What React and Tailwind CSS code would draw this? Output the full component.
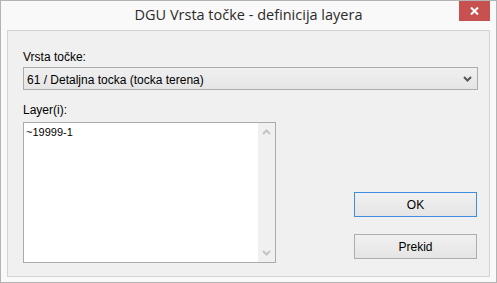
import React from "react";

const Chevron = ({ up, color }) => (
  <svg width="9" height="6" viewBox="0 0 9 6">
    <polyline
      points={up ? "1,5 4.5,1.5 8,5" : "1,1 4.5,4.5 8,1"}
      fill="none"
      stroke={color}
      strokeWidth="2"
    />
  </svg>
);

export default function App() {
  return (
    <div className="w-[497px] h-[283px] border border-[#b4b4b4] bg-[#f9f9f9] flex flex-col font-['Liberation_Sans',Arial,sans-serif] text-black">
      {/* title bar */}
      <div className="relative h-[29px] flex items-center justify-center">
        <span className="font-['Open_Sans',sans-serif] text-[14.5px] text-[#2b2b2b] leading-none pb-[1px]">
          DGU Vrsta točke - definicija layera
        </span>
        <button className="absolute right-[6px] top-0 w-[31px] h-[20px] bg-[#c75050] flex items-center justify-center">
          <svg width="9" height="8" viewBox="0 0 9 8">
            <path d="M1 0.5 L8 7.5 M8 0.5 L1 7.5" stroke="#fff" strokeWidth="2" />
          </svg>
        </button>
      </div>

      {/* client area */}
      <div className="flex-1 mx-[6px] mb-[5px] border border-[#d3d3d3] bg-[#f0f0f0] pl-[15px] pr-[11px] pt-[19px] flex flex-col">
        <div className="text-[12px] leading-[14px]">Vrsta točke:</div>
        <div className="mt-[3px] h-[23px] border border-[#acacac] bg-gradient-to-b from-[#f0f0f0] to-[#e5e5e5] flex items-center pl-[3px] pr-[5px]">
          <span className="flex-1 text-[12px] leading-none pt-[2px]">61 / Detaljna tocka (tocka terena)</span>
          <Chevron color="#565656" />
        </div>

        <div className="mt-[13px] text-[12px] leading-[14px]">Layer(i):</div>
        <div className="mt-[5px] flex">
          <div className="w-[253px] h-[141px] border border-[#aaaaaa] bg-white flex">
            <div className="flex-1 pl-[2px] pt-[3px] text-[11px] leading-[13px]">~19999-1</div>
            <div className="w-[17px] bg-[#f0f0f0] flex flex-col items-center justify-between py-[6px]">
              <Chevron up color="#c4c4c4" />
              <Chevron color="#c4c4c4" />
            </div>
          </div>

          <div className="ml-auto mr-[1px] mt-[70px] flex flex-col gap-[17px]">
            <button className="w-[123px] h-[25px] border border-[#3d8ee0] bg-gradient-to-b from-[#f0f0f0] to-[#e5e5e5] text-[12px] leading-none">
              OK
            </button>
            <button className="w-[123px] h-[25px] border border-[#adadad] bg-gradient-to-b from-[#f0f0f0] to-[#e5e5e5] text-[12px] leading-none">
              Prekid
            </button>
          </div>
        </div>
      </div>
    </div>
  );
}
